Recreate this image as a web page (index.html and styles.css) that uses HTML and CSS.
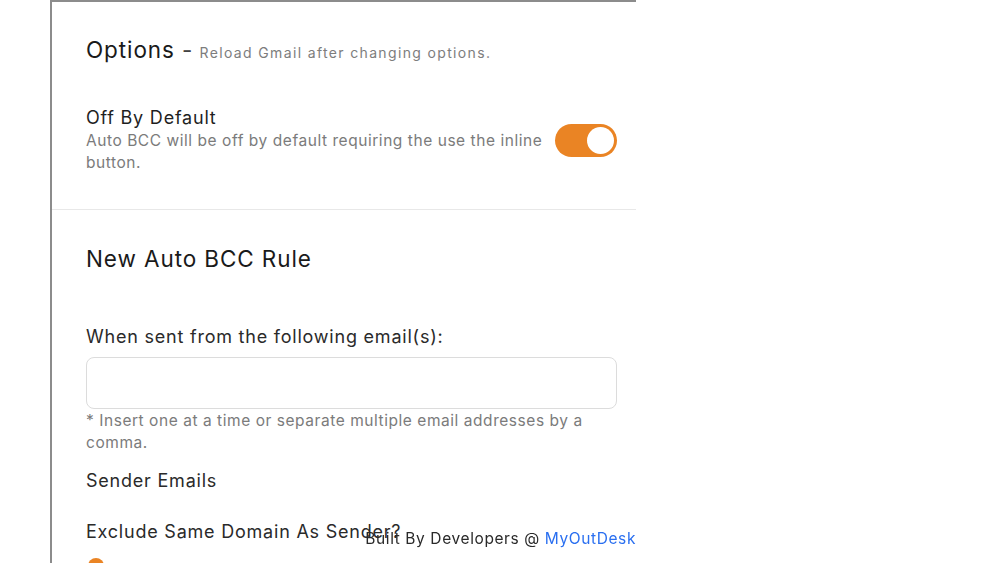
FILE: index.html
```html
<!DOCTYPE html>
<html>
<head>
<meta charset="utf-8">
<link rel="stylesheet" href="styles.css">
</head>
<body>
<div class="panel">
  <section class="options">
    <h2 class="title">Options <span class="dash">-</span> <span class="sub">Reload Gmail after changing options.</span></h2>
    <div class="setting">
      <div class="setting-text">
        <div class="setting-name">Off By Default</div>
        <div class="setting-desc">Auto BCC will be off by default requiring the use the inline button.</div>
      </div>
      <div class="toggle"><div class="knob"></div></div>
    </div>
  </section>
  <section class="rule">
    <h2 class="title">New Auto BCC Rule</h2>
    <label class="field-label">When sent from the following email(s):</label>
    <div class="input"></div>
    <div class="hint">* Insert one at a time or separate multiple email addresses by a comma.</div>
    <div class="field-label plain">Sender Emails</div>
    <div class="field-label plain exclude">Exclude Same Domain As Sender?</div>
    <div class="radio"></div>
  </section>
</div>
<div class="footer">Built By Developers @ <a class="link">MyOutDesk</a></div>
</body>
</html>
```
FILE: styles.css
```css
html, body {
  margin: 0;
  padding: 0;
  background: #fff;
  height: 100%;
  overflow: hidden;
}
body {
  font-family: Inter, "Noto Sans", sans-serif;
  color: #1c1c1c;
}
.panel {
  margin-left: 50px;
  width: 584px;
  min-height: 600px;
  border-left: 2px solid #8c8c8c;
  border-top: 2px solid #8c8c8c;
}
.options {
  padding: 34px 19px 35px 34px;
  border-bottom: 1px solid #e8e8e8;
}
.title {
  margin: 0;
  font-size: 22.5px;
  font-weight: 400;
  line-height: 28px;
  letter-spacing: 0.9px;
  color: #1a1a1a;
}
.dash {
  color: #444;
  letter-spacing: 0;
}
.sub {
  font-size: 14px;
  letter-spacing: 1.35px;
  color: #7d7d7d;
}
.setting {
  display: flex;
  align-items: center;
  margin-top: 39px;
  gap: 12px;
}
.setting-text {
  flex: 1;
}
.setting-name {
  font-size: 18px;
  line-height: 24px;
  letter-spacing: 0.78px;
  color: #1f1f1f;
}
.setting-desc {
  font-size: 15.5px;
  line-height: 22px;
  letter-spacing: 0.55px;
  color: #7b7b7b;
}
.toggle {
  width: 62px;
  height: 33px;
  border-radius: 17px;
  background: #ea8424;
  display: flex;
  align-items: center;
  justify-content: flex-end;
  padding: 0 3px;
  box-sizing: border-box;
  flex-shrink: 0;
}
.knob {
  width: 27px;
  height: 27px;
  border-radius: 50%;
  background: #fff;
}
.rule {
  padding: 35px 19px 0 34px;
}
.field-label {
  display: block;
  margin-top: 52px;
  font-size: 18px;
  line-height: 24px;
  letter-spacing: 0.78px;
  color: #2a2a2a;
}
.input {
  margin-top: 8px;
  height: 50px;
  border: 1px solid #dcdcdc;
  border-radius: 8px;
}
.hint {
  margin-top: 1px;
  font-size: 15.5px;
  line-height: 22px;
  letter-spacing: 0.55px;
  color: #7b7b7b;
}
.plain {
  margin-top: 15px;
}
.exclude {
  margin-top: 27px;
}
.radio {
  margin-top: 14px;
  margin-left: 2px;
  width: 16px;
  height: 16px;
  border-radius: 50%;
  background: #ea8424;
}
.footer {
  position: fixed;
  right: 364px;
  bottom: 14px;
  font-size: 15.5px;
  line-height: 20px;
  letter-spacing: 0.6px;
  color: #2a2a2a;
}
.link {
  color: #2a6ff0;
}
```
